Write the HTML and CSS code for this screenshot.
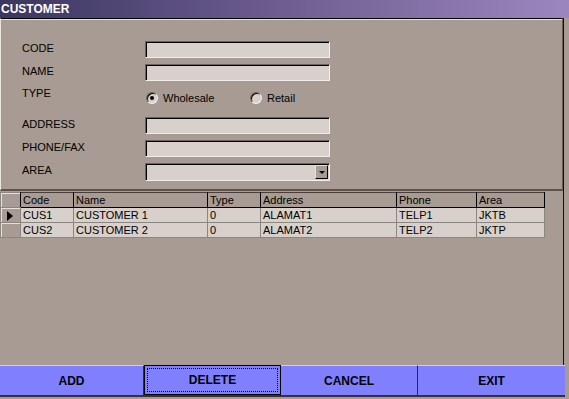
FILE: index.html
```html
<!DOCTYPE html>
<html lang="en">
<head>
  <meta charset="UTF-8">
  <title>Customer</title>
  <link rel="stylesheet" href="styles.css">
</head>
<body>
  <div class="titlebar">CUSTOMER</div>

  <div class="window">
    <!-- Entry form -->
    <div class="panel">
      <div class="form">
        <label>CODE</label>
        <div class="input"></div>

        <label>NAME</label>
        <div class="input"></div>

        <label class="type-label">TYPE</label>
        <div class="radios">
          <span class="radio checked"></span><span class="radio-text">Wholesale</span>
          <span class="radio"></span><span class="radio-text last">Retail</span>
        </div>

        <label>ADDRESS</label>
        <div class="input"></div>

        <label>PHONE/FAX</label>
        <div class="input"></div>

        <label>AREA</label>
        <div class="input combo"><span class="combo-btn"></span></div>
      </div>
    </div>

    <!-- Data grid -->
    <div class="grid-area">
      <table class="grid">
        <colgroup>
          <col style="width:20px"><col style="width:53px"><col style="width:134px">
          <col style="width:53px"><col style="width:136px"><col style="width:80px"><col style="width:68px">
        </colgroup>
        <tr class="head">
          <th class="ind"></th><th>Code</th><th>Name</th><th>Type</th><th>Address</th><th>Phone</th><th>Area</th>
        </tr>
        <tr>
          <td class="ind"><span class="arrow"></span></td><td>CUS1</td><td>CUSTOMER 1</td><td>0</td><td>ALAMAT1</td><td>TELP1</td><td>JKTB</td>
        </tr>
        <tr>
          <td class="ind"></td><td>CUS2</td><td>CUSTOMER 2</td><td>0</td><td>ALAMAT2</td><td>TELP2</td><td>JKTP</td>
        </tr>
      </table>
    </div>

    <!-- Action buttons -->
    <div class="buttons">
      <div class="btn btn-add">ADD</div>
      <div class="btn btn-delete"><span class="focus">DELETE</span></div>
      <div class="btn btn-cancel">CANCEL</div>
      <div class="btn btn-exit">EXIT</div>
    </div>
  </div>
</body>
</html>
```

FILE: styles.css
```css
/* Old VB style customer form */
* {
  box-sizing: border-box;
}

body {
  margin: 0;
  width: 569px;
  height: 399px;
  overflow: hidden;
  background-color: #a89b93;
  font-family: "Liberation Sans", Arial, sans-serif;
  font-size: 11px;
  color: #000;
}

.titlebar {
  height: 18px;
  line-height: 18px;
  padding-left: 1px;
  background: linear-gradient(to right, #3b3660, #6e5e90 50%, #9c86bf);
  color: #fff;
  font-weight: bold;
  font-size: 12px;
}

.window {
  width: 564px;
  border-right: 1px solid #111;
}

/* Form panel */
.panel {
  height: 173px;
  border-top: 1px solid #000;
  border-left: 1px solid #ece6e2;
  border-right: 1px solid #6a5c56;
  border-bottom: 2px solid #5e504b;
  box-shadow: inset 0 1px 0 #e6dfdb;
  padding: 22px 0 0 21px;
}

.form {
  display: grid;
  grid-template-columns: 123px 185px;
  grid-template-rows: 17px 17px 24px 17px 17px 18px;
  row-gap: 6px;
}

.form label {
  padding-top: 1px;
  line-height: 13px;
}

.form .type-label {
  margin-top: -1px;
}

.input {
  position: relative;
  background-color: #d8d0cb;
  border: 1px solid;
  border-color: #6e605a #f2eeeb #f2eeeb #6e605a;
  box-shadow: inset 1px 1px 0 #000;
}

.combo-btn {
  position: absolute;
  right: 1px;
  top: 1px;
  width: 13px;
  height: 14px;
  background-color: #a89b93;
  border: 1px solid;
  border-color: #e6dfdb #000 #000 #e6dfdb;
}

.combo-btn::after {
  content: "";
  position: absolute;
  left: 3px;
  top: 5px;
  border-left: 3px solid transparent;
  border-right: 3px solid transparent;
  border-top: 3px solid #000;
}

.radios {
  display: flex;
  align-items: center;
  margin-top: 5px;
  height: 12px;
  padding-left: 1px;
}

.radio {
  position: relative;
  flex-shrink: 0;
  width: 12px;
  height: 12px;
  border-radius: 50%;
  background-color: #d8d0cb;
  border: 1px solid;
  border-color: #6e605a #f2eeeb #f2eeeb #6e605a;
  box-shadow: inset 1px 1px 0 #000;
}

.radio.checked::after {
  content: "";
  position: absolute;
  left: 3px;
  top: 3px;
  width: 4px;
  height: 4px;
  border-radius: 50%;
  background-color: #000;
}

.radio-text {
  flex-shrink: 0;
  margin-left: 5px;
  width: 87px;
  line-height: 13px;
}

.radio-text.last {
  width: auto;
}

/* Grid */
.grid-area {
  height: 174px;
  padding-top: 1px;
}

.grid {
  border-collapse: collapse;
  table-layout: fixed;
  width: 544px;
}

.grid th,
.grid td {
  padding: 0 0 0 2px;
  text-align: left;
  font-weight: normal;
  white-space: nowrap;
  overflow: hidden;
}

.grid .head th {
  height: 13px;
  line-height: 14px;
  border: 1px solid #000;
  border-top-color: #4a3e3a;
}

.grid td {
  height: 15px;
  line-height: 13px;
  background-color: #d8d0cb;
  border: 1px solid #8c8682;
}

.grid .ind {
  background-color: #a89b93;
  border-color: #8c8682;
  box-shadow: inset 1px 1px 0 #e6dfdb;
  position: relative;
}

.grid .head .ind {
  border-color: #8c8682 #000 #8c8682 #8c8682;
}

.arrow {
  position: absolute;
  left: 6px;
  top: 3px;
  border-top: 5px solid transparent;
  border-bottom: 5px solid transparent;
  border-left: 6px solid #000;
}

/* Buttons */
.buttons {
  display: flex;
  height: 32px;
  border-bottom: 2px solid #3a3030;
  width: 565px;
}

.btn {
  display: flex;
  align-items: center;
  justify-content: center;
  background-color: #8080ff;
  border-top: 1px solid #d8d0cb;
  border-right: 1px solid #2c2c40;
  font-weight: bold;
  font-size: 12px;
}

.btn-add { width: 144px; }
.btn-delete {
  width: 137px;
  border: 1px solid #000;
  padding: 2px;
}
.btn-cancel { width: 137px; }
.btn-exit { width: 147px; border-right: none; }

.focus {
  display: flex;
  align-items: center;
  justify-content: center;
  width: 100%;
  height: 100%;
  border: 1px dotted #000;
}
```
